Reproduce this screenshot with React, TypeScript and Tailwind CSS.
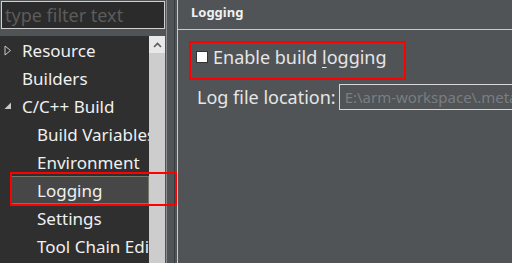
import React from "react";

const font = { fontFamily: '"Noto Sans", "Open Sans", sans-serif' };

function Collapsed() {
  return (
    <svg width="8" height="11" viewBox="0 0 8 11" className="shrink-0">
      <path d="M1 1 L6.5 5.5 L1 10 Z" fill="none" stroke="#c8c8c8" strokeWidth="1" />
    </svg>
  );
}

function Expanded() {
  return (
    <svg width="8" height="8" viewBox="0 0 8 8" className="shrink-0">
      <path d="M7 0.5 L7 7 L0.5 7 Z" fill="#c8c8c8" />
    </svg>
  );
}

type Item = { label: string; level: number; arrow?: "c" | "e"; selected?: boolean };

const items: Item[] = [
  { label: "Resource", level: 0, arrow: "c" },
  { label: "Builders", level: 0 },
  { label: "C/C++ Build", level: 0, arrow: "e" },
  { label: "Build Variables", level: 1 },
  { label: "Environment", level: 1 },
  { label: "Logging", level: 1, selected: true },
  { label: "Settings", level: 1 },
  { label: "Tool Chain Editor", level: 1 },
];

export default function App() {
  return (
    <div
      className="relative w-[512px] h-[263px] overflow-hidden bg-[#505457] flex text-[#f0f0f0]"
      style={font}
    >
      {/* Left column */}
      <div className="w-[166px] shrink-0 flex flex-col">
        <div className="h-[30px] pt-[1px] pl-[1px] pr-[1px]">
          <div className="h-[28px] w-[164px] border border-[#d0d0d0] bg-[#2b2b2b] flex items-center pl-[3px] text-[18px] text-[#5c5c5c] leading-none">
            type filter text
          </div>
        </div>
        <div className="h-[6px]" />
        <div className="flex-1 flex">
          <div className="w-[149px] bg-[#2f2f2f] overflow-hidden">
            {items.map((it) => (
              <div
                key={it.label}
                className={`h-[28px] flex items-center whitespace-nowrap text-[17px] leading-none ${
                  it.selected ? "ml-[10px] border border-[#77776a] bg-[#474747] h-[27px]" : ""
                }`}
              >
                {it.level === 0 ? (
                  <>
                    <div className="w-[22px] pl-[4px] flex items-center">
                      {it.arrow === "c" && <Collapsed />}
                      {it.arrow === "e" && <Expanded />}
                    </div>
                    <span>{it.label}</span>
                  </>
                ) : (
                  <span className={it.selected ? "pl-[26px]" : "pl-[37px]"}>{it.label}</span>
                )}
              </div>
            ))}
          </div>
          <div className="w-[16px] bg-[#cdcdcd] flex flex-col">
            <div className="h-[17px] bg-[#e8e8e8] flex items-center justify-center">
              <svg width="9" height="6" viewBox="0 0 9 6">
                <path d="M1 5 L4.5 1.5 L8 5" fill="none" stroke="#5a5a5a" strokeWidth="1.6" />
              </svg>
            </div>
          </div>
        </div>
      </div>
      {/* sash */}
      <div className="w-[8px] shrink-0 border-l border-[#e0e0e0]/40" />
      <div className="w-[1px] shrink-0 bg-[#3a3d3f]" />
      <div className="w-[2px] shrink-0" />
      {/* Right panel */}
      <div className="flex-1 border-l border-[#c8cacb] flex flex-col">
        <div className="h-[30px] shrink-0 border-b border-[#c8cacb] flex items-center pl-[13px] pb-[4px] text-[13px] font-bold text-[#f0f0f0]">
          Logging
        </div>
        <div className="mt-[13px] pl-[18px] flex items-center h-[28px] shrink-0">
          <div className="w-[12px] h-[12px] bg-white border border-[#333] mr-[5px]" />
          <span className="text-[18px] leading-none text-[#e6e6e6]">
            Enable build <span className="underline underline-offset-[3px] decoration-1">l</span>ogging
          </span>
        </div>
        <div className="mt-[13px] pl-[19px] flex items-center h-[26px] shrink-0">
          <span className="text-[18px] leading-none text-[#e6e6e6] mr-[3px] whitespace-nowrap">Log file location:</span>
          <div className="flex-1 h-[26px] border border-[#d8d8d8] flex items-center pl-[5px] text-[15px] text-[#7a7e80] whitespace-nowrap overflow-hidden leading-none">
            E:\arm-workspace\.metadata\.plugins
          </div>
        </div>
      </div>
      {/* highlight rectangles */}
      <div className="absolute left-[10px] top-[172px] w-[167px] h-[34px] border-2 border-[#ff0000] pointer-events-none" />
      <div className="absolute left-[189px] top-[41px] w-[217px] h-[39px] border-2 border-[#ff0000] pointer-events-none" />
    </div>
  );
}
